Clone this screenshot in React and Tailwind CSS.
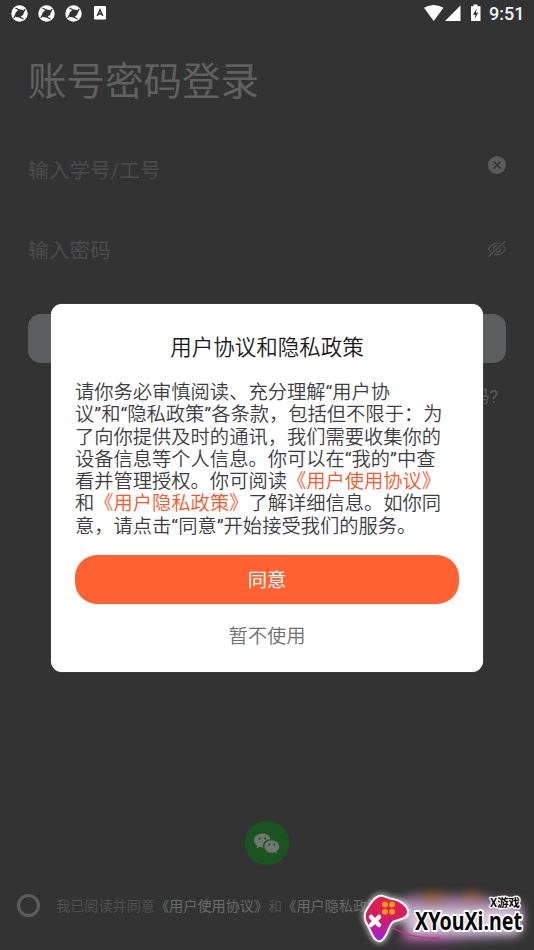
const Aperture = () => (
  <svg className="h-[17px] w-[17px]" viewBox="0 0 17 17">
    <circle cx="8.5" cy="8.5" r="8.2" fill="#fff" />
    <path d="M8 4.500 12.700 5 12.400 9.500 9 12.600 4.300 12 4.600 7.500Z" fill="#333" />
    <path d="M8.500 5.200 4.500 3M12 8 14.200 4M8.500 12 12.500 14M5 9 2.800 13" stroke="#333" strokeWidth="1.300" />
  </svg>
);

const StatusBar = () => (
  <div className="flex h-[26px] items-center pl-[11px] pr-[10px]">
    <div className="flex items-center gap-[10px]">
      <Aperture />
      <Aperture />
      <Aperture />
    </div>
    <svg className="ml-[12px] h-[14px] w-[12px]" viewBox="0 0 12 14">
      <rect width="12" height="13.5" rx="0.8" fill="#fff" />
      <path d="M3.2 10 6 3.8 8.8 10M4.2 8.1H7.8" fill="none" stroke="#333" strokeWidth="1.5" />
    </svg>
    <svg className="ml-auto h-[20px] w-[60px]" viewBox="0 0 60 20" fill="#fff">
      <path d="M0 4.8Q9.500-.9 19.500 4.800L9.700 17.900Z" />
      <path d="M21 17.900 36.500 2.400V17.900Z" />
      <path d="M47 3.300H49.500V1.500H53.500V3.300H56.500V18H47Z" />
      <path d="M52.700 5.500 49 11.700H51.400L50.600 15.800 54.300 9.800H52Z" fill="#333" />
    </svg>
    <span className="ml-[5px] w-[35px] whitespace-nowrap pt-[1px] text-[18px] font-medium leading-[20px] text-[#f5f5f5]">9:51</span>
  </div>
);

const ClearIcon = () => (
  <svg className="h-[18px] w-[18px]" viewBox="0 0 18 18">
    <circle cx="9" cy="9" r="9" fill="#5b5b5b" />
    <path d="M5.500 5.500 12.500 12.500M12.500 5.500 5.500 12.500" stroke="#333" strokeWidth="1.500" />
  </svg>
);

const HiddenIcon = () => (
  <svg className="h-[18px] w-[20px]" viewBox="0 0 20 18" fill="none" stroke="#505050" strokeWidth="1.400">
    <path d="M1.500 9C4 4.900 7 3.300 10 3.300S16 4.900 18.500 9C16 13.100 13 14.700 10 14.700S4 13.100 1.500 9Z" />
    <circle cx="10" cy="9" r="3.300" />
    <path d="M1 17 18.500 1" stroke="#333" strokeWidth="3.500" />
    <path d="M1 17 18.500 1" />
  </svg>
);

const WeChat = () => (
  <svg className="h-[46px] w-[46px]" viewBox="0 0 46 46">
    <circle cx="23" cy="23" r="22.300" fill="#1b5420" />
    <g fill="#707670">
      <path d="M18.500 13.500C13.700 13.500 10 16.600 10 20.500 10 22.700 11.200 24.700 13.200 26L12.400 28.600 15.400 27.100Q17 27.600 19.300 27.500C17.900 23 21.500 19.200 26.800 19.300 26 15.900 22.600 13.500 18.500 13.500Z" />
      <path d="M27.700 20.300C23.500 20.300 20.400 23.100 20.400 26.500S23.600 32.700 27.700 32.700Q29.300 32.700 30.600 32.200L33.100 33.500 32.500 31.300C34.100 30.200 35.200 28.500 35.200 26.500 35.200 23.100 31.800 20.300 27.700 20.300Z" />
    </g>
    <g fill="#1b5420">
      <circle cx="15.600" cy="18.500" r="1.100" /><circle cx="21.300" cy="18.500" r="1.100" />
      <circle cx="25.300" cy="24.500" r=".9" /><circle cx="30.200" cy="24.500" r=".9" />
    </g>
  </svg>
);

const Watermark = () => (
  <svg className="absolute bottom-0 right-0 h-[70px] w-[184px]" viewBox="0 0 184 70">
    <defs>
      <filter id="halo" x="-30%" y="-50%" width="160%" height="200%"><feGaussianBlur stdDeviation="5" /></filter>
      <filter id="glow" x="-30%" y="-30%" width="160%" height="160%"><feGaussianBlur stdDeviation="2.500" /></filter>
      <linearGradient id="pad" x1="0" y1="0" x2="0" y2="1">
        <stop offset="0" stopColor="#e51f49" /><stop offset=".5" stopColor="#d51c62" /><stop offset="1" stopColor="#a020e0" />
      </linearGradient>
    </defs>
    <g filter="url(#halo)">
      <path d="M50 20Q60 13 106 16L169 21Q180 42 167 57L66 62Q46 54 50 20Z" fill="#a080a4" />
      <ellipse cx="84" cy="18" rx="14" ry="5" fill="#a0682f" />
      <ellipse cx="122" cy="17" rx="12" ry="4" fill="#a0682f" />
      <path d="M60 30H170V52H60Z" fill="#dccadf" />
      <path d="M50 60H104" stroke="#9c3b94" strokeWidth="5" />
    </g>
    <path d="M29 16C34 14 37 19 43 19C49 20 57 25 58 31C59 39 49 39 43 42C38 46 38 57 31 61C24 63 21 51 18 46C14 40 13 35 17 29C21 23 23 18 29 16Z" fill="#fff" stroke="#fff" strokeWidth="6" opacity=".5" filter="url(#glow)" />
    <path d="M39 45Q57 59 89 58" fill="none" stroke="#d62d82" strokeWidth="1.500" />
    <path d="M29 16C34 14 37 19 43 19C49 20 57 25 58 31C59 39 49 39 43 42C38 46 38 57 31 61C24 63 21 51 18 46C14 40 13 35 17 29C21 23 23 18 29 16Z" fill="url(#pad)" stroke="#fff" strokeWidth="2" />
    <g fill="#ffa013">
      <circle cx="35" cy="24.500" r="2.900" /><circle cx="42" cy="24.500" r="2.900" />
      <circle cx="35" cy="31.800" r="2.900" /><circle cx="42" cy="31.800" r="2.900" />
    </g>
    <path d="M21 37 29 45M29 37 21 45" stroke="#fff" strokeWidth="4.500" strokeLinecap="round" />
    <g fontWeight="700" fill="#080808" stroke="#fff" strokeLinejoin="round" paintOrder="stroke">
      <text x="65" y="50" fontFamily="'Noto Sans', sans-serif" fontSize="24.500" strokeWidth="4" textLength="107" lengthAdjust="spacingAndGlyphs">XYouXi.net</text>
      <text x="140" y="26.500" fontFamily="'Noto Sans CJK SC', sans-serif" fontSize="11" strokeWidth="2.500" textLength="30" lengthAdjust="spacingAndGlyphs">X游戏</text>
    </g>
  </svg>
);

const Quoted = ({ children }) => (
  <>
    <span className="font-normal">“</span>
    {children}
    <span className="font-normal">”</span>
  </>
);

export default function App() {
  return (
    <div className="relative h-[950px] w-[534px] overflow-hidden bg-[#333] font-[Roboto,'Noto_Sans_CJK_SC',sans-serif] whitespace-nowrap [text-spacing-trim:space-all]">
      <div className="flex h-full flex-col">
        <StatusBar />
        <h1 className="mt-[32px] pl-[28px] text-[38.500px] leading-[48px] text-[#606060]">账号密码登录</h1>
        <div className="mt-[46px] flex h-[36px] items-center justify-between pl-[28px] pr-[28px] text-[20.700px] leading-[28px] text-[#4c4c4e]">
          <span className="pt-[2px]">输入学号/工号</span>
          <div className="-mt-[10px]"><ClearIcon /></div>
        </div>
        <div className="mt-[43px] flex h-[36px] items-center justify-between pl-[28px] pr-[27px] text-[20.700px] leading-[28px] text-[#4c4c4e]">
          <span className="pt-[3px]">输入密码</span>
          <HiddenIcon />
        </div>
        <div className="mx-[28px] mt-[47px] h-[49px] rounded-[13px] bg-[#5c5d5f]" />
        <div className="mt-[22px] pr-[36px] text-right text-[18px] leading-[24px] text-[#5c5c5c]">忘记密码?</div>
        <div className="mt-[411px] flex justify-center"><WeChat /></div>
        <div className="mt-[27px] flex h-[24px] items-center pl-[17px]">
          <div className="h-[23px] w-[23px] rounded-full border-[3px] border-[#5c5c5c]" />
          <div className="ml-[16px] pt-[2px] text-[14.150px] leading-[20px] text-[#515151]">
            我已阅读并同意<span className="text-[#6b6b6b]">《用户使用协议》</span>和<span className="text-[#6b6b6b]">《用户隐私政策》</span>
          </div>
        </div>
      </div>

      <div className="absolute left-[51px] top-[304px] flex h-[368px] w-[432px] flex-col rounded-[11px] bg-white px-[24px] font-[350] shadow-[0_0_1px_#aaa]">
        <h2 className="mt-[29px] text-center text-[21.500px] leading-[30px] text-[#1a1a1a]">用户协议和隐私政策</h2>
        <div className="mt-[19px] text-[19.270px] leading-[22.300px] text-[#3c3d41]">
          <p>请你务必审慎阅读、充分理解<span className="font-normal">“</span>用户协</p>
          <p>议<span className="font-normal">”</span>和<Quoted>隐私政策</Quoted>各条款，包括但不限于：为</p>
          <p>了向你提供及时的通讯，我们需要收集你的</p>
          <p>设备信息等个人信息。你可以在<Quoted>我的</Quoted>中查</p>
          <p>看并管理授权。你可阅读<span className="text-[#ff5526]">《用户使用协议》</span></p>
          <p>和<span className="text-[#ff5526]">《用户隐私政策》</span>了解详细信息。如你同</p>
          <p>意，请点击<Quoted>同意</Quoted>开始接受我们的服务。</p>
        </div>
        <button className="mt-[17px] h-[49px] shrink-0 rounded-[22px] bg-[#ff6132] pt-[2px] text-[19.300px] font-normal leading-[47px] text-white">同意</button>
        <button className="mt-[18px] text-[19.300px] leading-[30px] text-[#6e6f74]">暂不使用</button>
      </div>
      <Watermark />
    </div>
  );
}
